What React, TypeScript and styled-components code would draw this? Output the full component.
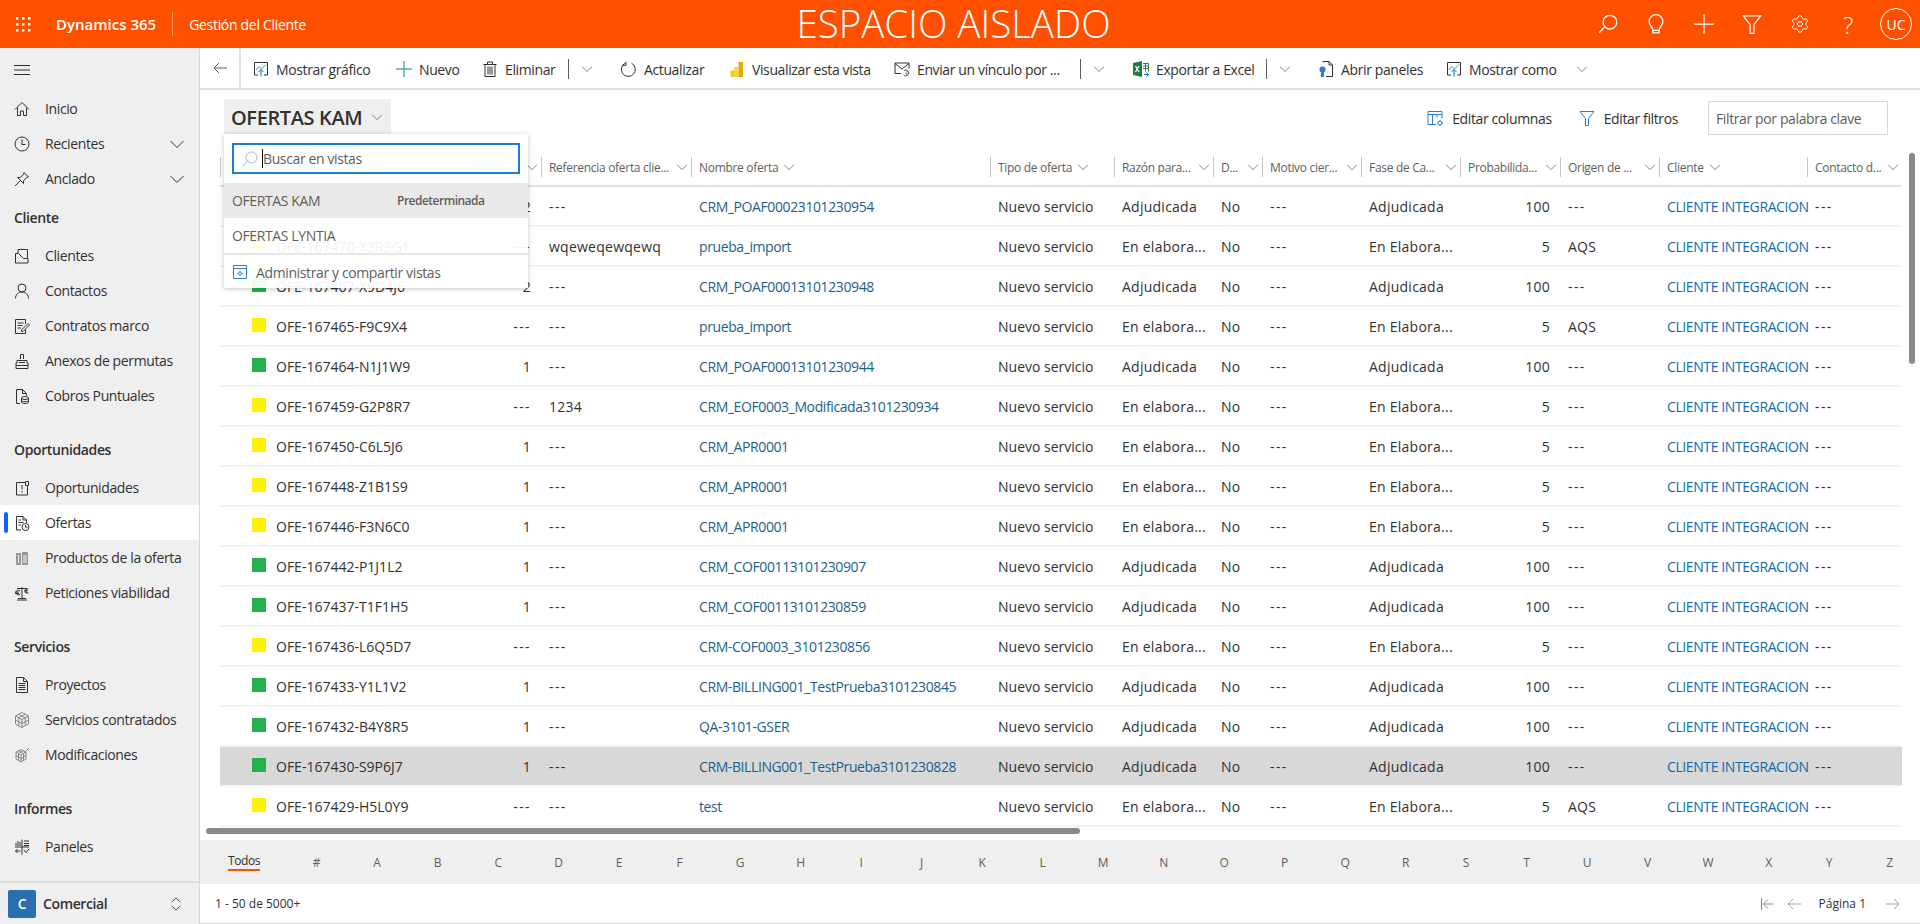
import type { ReactNode } from 'react';
import styled, { createGlobalStyle } from 'styled-components';
import { Settings } from 'lucide-react';

const FONT = `"Open Sans", "Noto Sans", Arial, sans-serif`;
const COLUMNS = '247px 74px 150px 299px 124px 99px 49px 99px 99px 100px 99px 148px 95px';
const DASH = '---';

type IconName = keyof typeof paths;

const paths = {
    home: <path d="M1 8.5 8 1.5l7 7M3.5 6.5v8h3V10h3v4.5h3v-8" />,
    clock: <><circle cx="8" cy="8" r="7" /><path d="M8 3.5v5h3.5" /></>,
    pin: <path d="M10 1.5 14.5 6l-2 .5-3 3.5v2.5L3.5 6.5H6L9.5 3.5ZM6.5 9.5 1 15" />,
    clients: <path d="M1.5 5.5h3l5 5h4.5v4.5h-12.5ZM4 5V1.5h9.5v9" />,
    contact: <><circle cx="8" cy="5" r="4" /><path d="M1.5 15.5c0-4 3-6.5 6.5-6.5s6.5 2.500 6.500 6.500" /></>,
    contract: <path d="M11.500 6V1.500h-10v14h10v-4M3.500 5h6M3.500 7.500h5M3.500 10h3.500M7.500 12l6.500-6.500 1.500 1.500-6.500 6.500H7.500Z" />,
    stamp: <path d="M6.500 6V1.500h3V6M2 15.500h12V10h-1V7.500H3V10H2ZM2 12.500h12M5 9.500h6" />,
    billing: <><path d="M6 15.500H2.500v-14h6l4 4v2M8.500 1.500v4h4" /><ellipse cx="11" cy="10" rx="3.500" ry="1.500" /><path d="M7.500 10v4c0 2 7 2 7 0v-4M7.500 12.500c0 1.500 7 1.500 7 0" /></>,
    deal: <path d="M2.500 2.500h9v-1h3v4h-1v9.500h-11ZM8 5v4.500M8 11v1.500M11.500 2.500v3h2" />,
    offer: <><path d="M7 15H2.500V1.500H9l3.500 3.500v3M9 1.500V5h3.500M4.500 5H7M4.500 7.500h5M4.500 10H7" /><circle cx="11.500" cy="12" r="3.500" /><path d="M11.500 10v2.200h2" /></>,
    product: <><path fill="#9a9896" stroke="none" d="M2 3h5v12H2ZM8 2h6v13H8Z" /><path stroke="#efefef" d="M4.500 5v8M10 5v8M12 5v8" /></>,
    scale: <path d="M8 2v12M3 15h10M4 13.500h8M3 3.500h10M6 5.500c-2-1-4 0-4 2s2 3 4 2M1 7h4M1 8.500h4M14.500 4c-2-.5-3.500 .5-3.500 2s1.500 2.500 3.500 2M10.500 5.500h3M10.500 7h3" />,
    project: <path d="M2.500 15.500v-15h7l4 4v11ZM9.500.5v4h4M4.500 6.500h7M4.500 8.500h7M4.500 10.500h7M4.500 12.500h7" />,
    cube: <path d="M8 .5l6.500 3.500v8L8 15.500 1.500 12V4ZM1.500 4 8 7.500 14.500 4M8 7.500v8M4.700 2.300l6.500 3.500v8M11.300 2.300 4.800 5.800v8M1.500 8 8 11.500 14.500 8" />,
    cubeEdit: <path d="M7 2.500 12 5v7L7 15 2 12V5ZM2 5l5 3 5-3M7 8v7M4.500 3.700 9.500 6.500v7M9.500 3.700 4.500 6.500v7M2 8.500 7 11.500 12 8.500M9 7l6-6" />,
    panels: <path d="M8 .5v15M2 7V4M4 7V2M6 7V3M1 8h14M10 2h5M10 4.500h5M10 6.500h5M1.500 12h5M3.500 10l-2 2 2 2M10 11l2 2.500 3-3.500" />,
    chart: <><path stroke="#323130" d="M5 14H1.500V1.500h13V14H11" /><path stroke="#3fa66a" d="M3 9l3-3.500L8.500 8 13 3.500" /><path stroke="#0f6cbd" d="M8 15.500V8.500M5.500 11 8 8.500l2.500 2.500" /></>,
    plus: <path stroke="#4fb286" strokeWidth="1.4" d="M8 0v16M0 8h16" />,
    trash: <path d="M1.500 3.500h13M5.500 3.500V1h5v2.500M3 3.500v12h10v-12M6 5.500v8M8 5.500v8M10 5.500v8" />,
    refresh: <path d="M10.500 2.200A7 7 0 1 1 4.500 2M5 .8v3.500H1.500" />,
    mail: <><path d="M7 12.500H1V2h14v5.500M1 2.500l7 5.500 7-5.500" /><path stroke="#555" d="M10 9.500a3 3 0 1 1-.5 4.500M12 11.500a1 1 0 1 0 1.500 1.500c1.500-.5 1-3-1-3.300" /></>,
    columns: <g stroke="#2b7cd3"><path d="M1 14.500V1.500h14v7M1 4.500h14M5.500 4.500v10M10 4.500v3M1 14.500h8" /><circle cx="13" cy="13" r="2" /><path d="M13 10v1M13 15v1M10 13h1M15 13h1" /></g>,
    filter: <path d="M1 1.500h14L9.500 8.500v7h-3v-7Z" />,
    gallery: <g stroke="#2b7cd3"><path d="M1.500 1.500h13v13h-13ZM1.500 4.500h13" /><circle cx="8" cy="9.500" r="1.500" /><path d="M8 6.500v1M8 11.500v1M5 9.500h1M10 9.500h1" /></g>,
    search: <path d="M9.500 1a5.500 5.500 0 1 1 0 11 5.500 5.500 0 0 1 0-11ZM6 9.500 1 15" />,
    bulb: <path d="M5.500 12.500v2.500h5v-2.500c0-1.500 3-3 3-6.500A5.500 5.500 0 0 0 2.500 6c0 3.500 3 5 3 6.500ZM5.500 13h5" />,
    cross: <path d="M8 0v16M0 8h16" />,
    first: <path d="M1.500 2v12M13.500 8H4M8 3.500 3.500 8 8 12.500" />,
    back: <path d="M15 8H2M7 3 2 8l5 5" />,
    next: <path d="M1 8h13M9 3l5 5-5 5" />,
    updown: <path d="M3 6l5-5 5 5M3 10l5 5 5-5" />,
    chevron: <path d="M1.500 5 8 11.500 14.500 5" />,
    menu: <path d="M0 3.500h16M0 8h16M0 12.500h16" />,
};

const Icon = ({ name, size = 16, color = '#323130' }: { name: IconName; size?: number; color?: string }) => (
    <IconSvg viewBox="0 0 16 16" width={size} height={size} stroke={color}>
        {paths[name]}
    </IconSvg>
);

const PowerBiIcon = () => (
    <IconSvg viewBox="0 0 16 16" width={16} height={16} stroke="none">
        <path fill="#f2c811" d="M1.500 9.500h4V16h-4Z" />
        <path fill="#f5d445" d="M5 6h4.500v10H5Z" />
        <path fill="#e3a909" d="M9.500 1h4.500v15H9.500Z" />
    </IconSvg>
);

const ExcelIcon = () => (
    <IconSvg viewBox="0 0 16 16" width={16} height={16} stroke="none">
        <path fill="#1d7c42" d="M0 2l9-2v16l-9-2Z" />
        <path stroke="#fff" strokeWidth="1.300" d="M2.500 5 6 11M6 5l-3.500 6" />
        <path stroke="#3c7d55" d="M10 2.500h5.500v8M10 5h5.500M10 7.500h5.500M12.500 2.500v8" />
        <path stroke="#0f6cbd" d="M11 13.500h4M13.500 11.500l2 2-2 2" />
    </IconSvg>
);

const PanelsDocIcon = () => (
    <IconSvg viewBox="0 0 16 16" width={16} height={16} stroke="#323130">
        <path d="M5 1.500V.5h6l3.500 3.500v11.500H8M11 .5V4h3.500" />
        <circle cx="4.500" cy="8.500" r="3" fill="#2b7cd3" stroke="none" />
        <path fill="#2b7cd3" stroke="none" d="M3 11h3v5H3Z" />
    </IconSvg>
);

type NavEntry = { label: string; icon: IconName; active?: boolean; expand?: boolean };

const NAV_TOP: NavEntry[] = [
    { label: 'Inicio', icon: 'home' },
    { label: 'Recientes', icon: 'clock', expand: true },
    { label: 'Anclado', icon: 'pin', expand: true },
];

const NAV_GROUPS: { title: string; items: NavEntry[] }[] = [
    {
        title: 'Cliente',
        items: [
            { label: 'Clientes', icon: 'clients' },
            { label: 'Contactos', icon: 'contact' },
            { label: 'Contratos marco', icon: 'contract' },
            { label: 'Anexos de permutas', icon: 'stamp' },
            { label: 'Cobros Puntuales', icon: 'billing' },
        ],
    },
    {
        title: 'Oportunidades',
        items: [
            { label: 'Oportunidades', icon: 'deal' },
            { label: 'Ofertas', icon: 'offer', active: true },
            { label: 'Productos de la oferta', icon: 'product' },
            { label: 'Peticiones viabilidad', icon: 'scale' },
        ],
    },
    {
        title: 'Servicios',
        items: [
            { label: 'Proyectos', icon: 'project' },
            { label: 'Servicios contratados', icon: 'cube' },
            { label: 'Modificaciones', icon: 'cubeEdit' },
        ],
    },
    { title: 'Informes', items: [{ label: 'Paneles', icon: 'panels' }] },
];

const HEADERS = [
    { label: 'Id. de oferta', spread: false },
    { label: 'Nume...', spread: true },
    { label: 'Referencia oferta clie...', spread: true },
    { label: 'Nombre oferta', spread: false },
    { label: 'Tipo de oferta', spread: false },
    { label: 'Razón para...', spread: true },
    { label: 'D...', spread: true },
    { label: 'Motivo cier...', spread: true },
    { label: 'Fase de Ca...', spread: true },
    { label: 'Probabilida...', spread: true },
    { label: 'Origen de ...', spread: true },
    { label: 'Cliente', spread: false },
    { label: 'Contacto d...', spread: true },
];

type Offer = { id: string; won: boolean; num: string; ref: string; name: string; origin: string; selected?: boolean };

const OFFERS: Offer[] = [
    { id: 'OFE-167469-D0M4C7', won: true, num: '2', ref: DASH, name: 'CRM_POAF00023101230954', origin: DASH },
    { id: 'OFE-167470-X3R3G1', won: false, num: DASH, ref: 'wqeweqewqewq', name: 'prueba_import', origin: 'AQS' },
    { id: 'OFE-167467-X9D4J6', won: true, num: '2', ref: DASH, name: 'CRM_POAF00013101230948', origin: DASH },
    { id: 'OFE-167465-F9C9X4', won: false, num: DASH, ref: DASH, name: 'prueba_import', origin: 'AQS' },
    { id: 'OFE-167464-N1J1W9', won: true, num: '1', ref: DASH, name: 'CRM_POAF00013101230944', origin: DASH },
    { id: 'OFE-167459-G2P8R7', won: false, num: DASH, ref: '1234', name: 'CRM_EOF0003_Modificada3101230934', origin: DASH },
    { id: 'OFE-167450-C6L5J6', won: false, num: '1', ref: DASH, name: 'CRM_APR0001', origin: DASH },
    { id: 'OFE-167448-Z1B1S9', won: false, num: '1', ref: DASH, name: 'CRM_APR0001', origin: DASH },
    { id: 'OFE-167446-F3N6C0', won: false, num: '1', ref: DASH, name: 'CRM_APR0001', origin: DASH },
    { id: 'OFE-167442-P1J1L2', won: true, num: '1', ref: DASH, name: 'CRM_COF00113101230907', origin: DASH },
    { id: 'OFE-167437-T1F1H5', won: true, num: '1', ref: DASH, name: 'CRM_COF00113101230859', origin: DASH },
    { id: 'OFE-167436-L6Q5D7', won: false, num: DASH, ref: DASH, name: 'CRM-COF0003_3101230856', origin: DASH },
    { id: 'OFE-167433-Y1L1V2', won: true, num: '1', ref: DASH, name: 'CRM-BILLING001_TestPrueba3101230845', origin: DASH },
    { id: 'OFE-167432-B4Y8R5', won: true, num: '1', ref: DASH, name: 'QA-3101-GSER', origin: DASH },
    { id: 'OFE-167430-S9P6J7', won: true, num: '1', ref: DASH, name: 'CRM-BILLING001_TestPrueba3101230828', origin: DASH, selected: true },
    { id: 'OFE-167429-H5L0Y9', won: false, num: DASH, ref: DASH, name: 'test', origin: 'AQS' },
];

const LETTERS = '#ABCDEFGHIJKLMNOPQRSTUVWXYZ'.split('');

const NavItem = ({ entry }: { entry: NavEntry }) => (
    <NavRow $active={entry.active}>
        <NavIcon><Icon name={entry.icon} color={entry.icon === 'cube' || entry.icon === 'cubeEdit' ? '#8a8886' : '#323130'} /></NavIcon>
        <span>{entry.label}</span>
        {entry.expand ? <NavChevron><Icon name="chevron" color="#323130" /></NavChevron> : null}
    </NavRow>
);

const Command = ({ width, icon, label }: { width: number; icon: ReactNode; label: string }) => (
    <CommandItem $width={width}>
        {icon}
        <span>{label}</span>
    </CommandItem>
);

const SplitChevron = ({ width = 40 }: { width?: number }) => (
    <CommandItem $width={width}><Icon name="chevron" size={12} color="#605e5c" /></CommandItem>
);

const TextCell = ({ value }: { value: string }) => <Cell $dash={value === DASH}>{value}</Cell>;

const RightCell = ({ value }: { value: string }) => <NumberCell $dash={value === DASH}>{value}</NumberCell>;

export default function App() {
    return (
        <>
            <GlobalStyle />
            <Page>
                <TopBar>
                    <Brand>
                        <Waffle viewBox="0 0 16 16" width={16} height={16}>
                            {[1, 7, 13].flatMap(y => [1, 7, 13].map(x => <rect key={`${x}-${y}`} x={x} y={y} width="2.500" height="2.500" fill="#fff" />))}
                        </Waffle>
                        <Product>Dynamics 365</Product>
                        <AppName>Gestión del Cliente</AppName>
                    </Brand>
                    <SandboxTitle>ESPACIO AISLADO</SandboxTitle>
                    <TopActions>
                        <TopButton><Icon name="search" size={20} color="#fff" /></TopButton>
                        <TopButton><Icon name="bulb" size={20} color="#fff" /></TopButton>
                        <TopButton><Icon name="cross" size={20} color="#fff" /></TopButton>
                        <TopButton><Icon name="filter" size={20} color="#fff" /></TopButton>
                        <TopButton><Settings size={20} strokeWidth={1.2} color="#fff" /></TopButton>
                        <TopButton><HelpMark>?</HelpMark></TopButton>
                        <Avatar>UC</Avatar>
                    </TopActions>
                </TopBar>
                <Body>
                    <Sidebar>
                        <Hamburger><Icon name="menu" color="#323130" /></Hamburger>
                        <Nav>
                            {NAV_TOP.map(entry => <NavItem key={entry.label} entry={entry} />)}
                            {NAV_GROUPS.map(group => (
                                <NavGroup key={group.title}>
                                    <NavHeading>{group.title}</NavHeading>
                                    {group.items.map(entry => <NavItem key={entry.label} entry={entry} />)}
                                </NavGroup>
                            ))}
                        </Nav>
                        <AreaSwitcher>
                            <AreaTile>C</AreaTile>
                            <AreaName>Comercial</AreaName>
                            <Icon name="updown" size={14} color="#323130" />
                        </AreaSwitcher>
                    </Sidebar>
                    <Main>
                        <Toolbar>
                            <BackButton><Icon name="back" color="#605e5c" /></BackButton>
                            <Command width={143} icon={<Icon name="chart" />} label="Mostrar gráfico" />
                            <Command width={86} icon={<Icon name="plus" />} label="Nuevo" />
                            <Command width={98} icon={<Icon name="trash" />} label="Eliminar" />
                            <Divider />
                            <SplitChevron />
                            <Command width={108} icon={<Icon name="refresh" />} label="Actualizar" />
                            <Command width={165} icon={<PowerBiIcon />} label="Visualizar esta vista" />
                            <Command width={198} icon={<Icon name="mail" />} label="Enviar un vínculo por ..." />
                            <Divider />
                            <SplitChevron />
                            <Command width={145} icon={<ExcelIcon />} label="Exportar a Excel" />
                            <Divider />
                            <SplitChevron width={39} />
                            <Command width={128} icon={<PanelsDocIcon />} label="Abrir paneles" />
                            <Command width={130} icon={<Icon name="chart" />} label="Mostrar como" />
                            <SplitChevron />
                        </Toolbar>
                        <ViewHeader>
                            <TitleHolder>
                                <ViewTitle>
                                    OFERTAS KAM
                                    <Icon name="chevron" size={12} color="#605e5c" />
                                </ViewTitle>
                                <Flyout>
                                    <FlyoutSearch>
                                        <Icon name="search" color="#8ab8e6" />
                                        <Caret />
                                        <span>Buscar en vistas</span>
                                    </FlyoutSearch>
                                    <FlyoutRow $current>
                                        <span>OFERTAS KAM</span>
                                        <DefaultTag>Predeterminada</DefaultTag>
                                    </FlyoutRow>
                                    <FlyoutRow>
                                        <span>OFERTAS LYNTIA</span>
                                    </FlyoutRow>
                                    <FlyoutManage>
                                        <Icon name="gallery" />
                                        <span>Administrar y compartir vistas</span>
                                    </FlyoutManage>
                                </Flyout>
                            </TitleHolder>
                            <ViewTools>
                                <ToolLink><Icon name="columns" />Editar columnas</ToolLink>
                                <ToolLink><Icon name="filter" color="#2b7cd3" />Editar filtros</ToolLink>
                                <KeywordBox>Filtrar por palabra clave</KeywordBox>
                            </ViewTools>
                        </ViewHeader>
                        <GridHeader>
                            {HEADERS.map(header => (
                                <HeaderCell key={header.label} $spread={header.spread}>
                                    <span>{header.label}</span>
                                    <Icon name="chevron" size={12} color="#605e5c" />
                                </HeaderCell>
                            ))}
                        </GridHeader>
                        <GridViewport>
                            {OFFERS.map(offer => (
                                <GridRow key={offer.id} $selected={offer.selected}>
                                    <IdCell>
                                        <StatusSquare $won={offer.won} />
                                        {offer.id}
                                    </IdCell>
                                    <RightCell value={offer.num} />
                                    <TextCell value={offer.ref} />
                                    <LinkCell>{offer.name}</LinkCell>
                                    <ServiceCell>Nuevo servicio</ServiceCell>
                                    <TextCell value={offer.won ? 'Adjudicada' : 'En elabora...'} />
                                    <TextCell value="No" />
                                    <TextCell value={DASH} />
                                    <TextCell value={offer.won ? 'Adjudicada' : 'En Elabora...'} />
                                    <RightCell value={offer.won ? '100' : '5'} />
                                    <TextCell value={offer.origin} />
                                    <ClientCell>CLIENTE INTEGRACION</ClientCell>
                                    <TextCell value={DASH} />
                                </GridRow>
                            ))}
                            <HorizontalThumb />
                        </GridViewport>
                        <JumpBar>
                            <JumpAll>Todos</JumpAll>
                            {LETTERS.map(letter => <JumpLetter key={letter}>{letter}</JumpLetter>)}
                        </JumpBar>
                        <Footer>
                            <span>1 - 50 de 5000+</span>
                            <Pager>
                                <PagerIcon><Icon name="first" color="#8a8886" /></PagerIcon>
                                <PagerIcon><Icon name="back" color="#a19f9d" /></PagerIcon>
                                <PageLabel>Página 1</PageLabel>
                                <PagerIcon><Icon name="next" color="#a19f9d" /></PagerIcon>
                            </Pager>
                        </Footer>
                        <VerticalThumb />
                    </Main>
                </Body>
            </Page>
        </>
    );
}

const GlobalStyle = createGlobalStyle`
    html, body {
        margin: 0;
        height: 100%;
        overflow: hidden;
    }

    body {
        font-family: ${FONT};
        font-size: 14px;
        letter-spacing: -0.38px;
        color: #323130;
    }

    * {
        box-sizing: border-box;
    }
`;

const IconSvg = styled.svg`
    flex: none;
    display: block;
    fill: none;
    stroke-width: 1;
`;

const Page = styled.div`
    display: flex;
    flex-direction: column;
    height: 924px;
    width: 1920px;
`;

const TopBar = styled.header`
    display: flex;
    align-items: center;
    flex: none;
    height: 48px;
    background: #ff5000;
    color: #fff;
`;

const Brand = styled.div`
    display: flex;
    align-items: center;
    width: 400px;
    padding-left: 15px;
`;

const Waffle = styled.svg`
    flex: none;
    margin-right: 25px;
`;

const Product = styled.span`
    font-weight: 600;
    font-size: 15px;
    letter-spacing: 0;
    padding-right: 16px;
    border-right: 1px solid rgba(255, 255, 255, 0.4);
    line-height: 24px;
`;

const AppName = styled.span`
    font-size: 14px;
    letter-spacing: -0.3px;
    padding-left: 16px;
`;

const SandboxTitle = styled.div`
    flex: 1;
    text-align: center;
    font-size: 38.5px;
    font-weight: 300;
    letter-spacing: 0;
    line-height: 46px;
    padding: 0 77px 2px 0;
    white-space: nowrap;
`;

const TopActions = styled.div`
    display: flex;
    align-items: center;
    padding-right: 8px;
`;

const TopButton = styled.div`
    display: flex;
    align-items: center;
    justify-content: center;
    width: 48px;
    height: 48px;
`;

const HelpMark = styled.span`
    font-size: 24px;
    font-weight: 300;
`;

const Avatar = styled.div`
    display: flex;
    align-items: center;
    justify-content: center;
    width: 32px;
    height: 32px;
    margin-left: 8px;
    border: 1px solid #fff;
    border-radius: 50%;
    font-size: 14px;
    letter-spacing: 0;
`;

const Body = styled.div`
    display: flex;
    flex: 1;
    min-height: 0;
`;

const Sidebar = styled.aside`
    display: flex;
    flex-direction: column;
    flex: none;
    width: 200px;
    background: #efefef;
    border-right: 1px solid #d8d8d8;
`;

const Hamburger = styled.div`
    display: flex;
    align-items: center;
    flex: none;
    height: 43px;
    padding-left: 14px;
`;

const Nav = styled.nav`
    flex: 1;
`;

const NavGroup = styled.div`
    & + & {
        margin-top: 15px;
    }
`;

const NavHeading = styled.div`
    display: flex;
    align-items: center;
    height: 42px;
    padding-left: 14px;
    font-weight: 600;
`;

const NavRow = styled.div<{ $active?: boolean }>`
    position: relative;
    display: flex;
    align-items: center;
    height: 35px;
    padding-left: 14px;
    background: ${props => (props.$active ? '#fff' : 'transparent')};

    &::before {
        content: '';
        display: ${props => (props.$active ? 'block' : 'none')};
        position: absolute;
        left: 4px;
        top: 7px;
        width: 4px;
        height: 21px;
        border-radius: 2px;
        background: #0f62fe;
    }
`;

const NavIcon = styled.span`
    flex: none;
    width: 31px;
`;

const NavChevron = styled.span`
    margin-left: auto;
    padding-right: 14px;
`;

const AreaSwitcher = styled.div`
    display: flex;
    align-items: center;
    flex: none;
    height: 43px;
    padding: 0 16px 0 8px;
    border-top: 2px solid #dedede;
`;

const AreaTile = styled.div`
    display: flex;
    align-items: center;
    justify-content: center;
    width: 28px;
    height: 28px;
    border-radius: 2px;
    background: #2b6fb0;
    color: #fff;
    font-weight: 600;
`;

const AreaName = styled.span`
    flex: 1;
    padding-left: 7px;
    font-weight: 600;
`;

const Main = styled.main`
    position: relative;
    display: flex;
    flex-direction: column;
    flex: 1;
    min-width: 0;
    border-bottom: 1px solid #d8d8d8;
`;

const Toolbar = styled.div`
    display: flex;
    align-items: center;
    flex: none;
    height: 42px;
    border-bottom: 2px solid #e1e1e1;
    white-space: nowrap;
`;

const BackButton = styled.div`
    display: flex;
    align-items: center;
    justify-content: center;
    flex: none;
    width: 41px;
    height: 100%;
    border-right: 2px solid #e1e1e1;
`;

const CommandItem = styled.div<{ $width: number }>`
    display: flex;
    align-items: center;
    flex: none;
    gap: 7px;
    width: ${props => props.$width}px;
    padding: 2px 0 0 12px;
    overflow: hidden;
`;

const Divider = styled.span`
    flex: none;
    width: 1px;
    height: 20px;
    margin-top: 2px;
    background: #605e5c;
`;

const ViewHeader = styled.div`
    display: flex;
    align-items: flex-start;
    justify-content: space-between;
    flex: none;
    height: 65px;
    padding: 9px 32px 0 24px;
`;

const TitleHolder = styled.div`
    position: relative;
`;

const ViewTitle = styled.div`
    display: flex;
    align-items: center;
    gap: 9px;
    width: 167px;
    height: 35px;
    padding: 1px 0 0 7px;
    background: #efefef;
    font-size: 20px;
    font-weight: 600;
    white-space: nowrap;
`;

const Flyout = styled.div`
    position: absolute;
    z-index: 5;
    top: 35px;
    left: 0;
    width: 304px;
    height: 154px;
    padding-top: 9px;
    background: rgba(255, 255, 255, 0.93);
    box-shadow: 0 1px 5px rgba(0, 0, 0, 0.22);
    color: #605e5c;
`;

const FlyoutSearch = styled.div`
    display: flex;
    align-items: center;
    height: 31px;
    margin: 0 8px 9px;
    padding-left: 8px;
    border: 2px solid #1a7fd0;
    background: rgba(255, 255, 255, 0.6);
`;

const Caret = styled.span`
    width: 1px;
    height: 19px;
    margin-left: 4px;
    background: #111;
`;

const FlyoutRow = styled.div<{ $current?: boolean }>`
    display: flex;
    align-items: center;
    height: 35px;
    padding-left: 8px;
    background: ${props => (props.$current ? 'rgba(232, 231, 230, 0.9)' : 'transparent')};
`;

const DefaultTag = styled.span`
    position: absolute;
    left: 173px;
    font-size: 12px;
    font-weight: 600;
    letter-spacing: -0.5px;
`;

const FlyoutManage = styled.div`
    display: flex;
    align-items: center;
    gap: 8px;
    height: 36px;
    padding-left: 8px;
    border-top: 2px solid #e6e6e6;
`;

const ViewTools = styled.div`
    display: flex;
    align-items: center;
    height: 34px;
    margin-top: 2px;
`;

const ToolLink = styled.div`
    display: flex;
    align-items: center;
    gap: 9px;
    margin-right: 30px;

    &:first-child {
        margin-right: 27px;
    }
`;

const KeywordBox = styled.div`
    display: flex;
    align-items: center;
    width: 180px;
    height: 34px;
    padding-left: 7px;
    border: 1px solid #d8d8d8;
    color: #605e5c;
    white-space: nowrap;
`;

const GridHeader = styled.div`
    display: grid;
    grid-template-columns: ${COLUMNS};
    align-items: center;
    flex: none;
    height: 32px;
    margin: 0 18px 0 20px;
    padding-bottom: 6px;
    border-bottom: 2px solid #e1e1e1;
`;

const HeaderCell = styled.div<{ $spread: boolean }>`
    display: flex;
    align-items: center;
    justify-content: ${props => (props.$spread ? 'space-between' : 'flex-start')};
    gap: 5px;
    height: 20px;
    padding: 0 3px 0 7px;
    border-left: 1px solid #c8c6c4;
    color: #605e5c;
    font-size: 12px;
    letter-spacing: -0.3px;
    white-space: nowrap;
`;

const GridViewport = styled.div`
    position: relative;
    flex: 1;
    min-height: 0;
    padding: 0 18px 0 20px;
    overflow: hidden;
`;

const GridRow = styled.div<{ $selected?: boolean }>`
    display: grid;
    grid-template-columns: ${COLUMNS};
    align-items: center;
    height: 40px;
    padding-top: 1px;
    border-bottom: 2px solid #f3f2f1;
    background: ${props => (props.$selected ? '#d8d8d8' : 'transparent')};
    letter-spacing: 0;
    white-space: nowrap;
`;

const Cell = styled.div<{ $dash?: boolean }>`
    padding-left: 8px;
    letter-spacing: ${props => (props.$dash ? '1.4px' : '0.25px')};
`;

const ServiceCell = styled.div`
    padding-left: 8px;
`;

const IdCell = styled.div`
    display: flex;
    align-items: center;
    gap: 10px;
    padding-left: 32px;
`;

const StatusSquare = styled.span<{ $won: boolean }>`
    flex: none;
    width: 14px;
    height: 14px;
    margin-top: -4px;
    background: ${props => (props.$won ? '#22b14c' : '#fff200')};
`;

const NumberCell = styled(Cell)`
    padding: 0 10px 0 0;
    text-align: right;
`;

const LinkCell = styled.div`
    padding-left: 8px;
    letter-spacing: -0.4px;
    color: #1b5f8c;
`;

const ClientCell = styled(LinkCell)`
    color: #0f6ab0;
`;

const HorizontalThumb = styled.div`
    position: absolute;
    left: 6px;
    bottom: 6px;
    width: 874px;
    height: 6px;
    border-radius: 3px;
    background: #8a8a8a;
`;

const VerticalThumb = styled.div`
    position: absolute;
    right: 5px;
    top: 105px;
    width: 6px;
    height: 211px;
    border-radius: 3px;
    background: #8a8a8a;
`;

const JumpBar = styled.div`
    display: flex;
    align-items: center;
    flex: none;
    height: 44px;
    padding-left: 28px;
    background: #efefef;
    color: #605e5c;
    font-size: 12px;
`;

const JumpAll = styled.span`
    margin-right: 26px;
    color: #323130;
    border-bottom: 2px solid #ff5000;
    line-height: 16px;
`;

const JumpLetter = styled.span`
    flex: none;
    width: 60.5px;
    text-align: center;
`;

const Footer = styled.div`
    display: flex;
    align-items: center;
    justify-content: space-between;
    flex: none;
    height: 39px;
    padding: 0 19px 0 15px;
    font-size: 12px;
    letter-spacing: 0;
`;

const Pager = styled.div`
    display: flex;
    align-items: center;
`;

const PagerIcon = styled.span`
    width: 16px;
    margin-right: 10px;

    &:last-child {
        margin-right: 0;
    }
`;

const PageLabel = styled.span`
    margin: 0 19px 0 7px;
`;
